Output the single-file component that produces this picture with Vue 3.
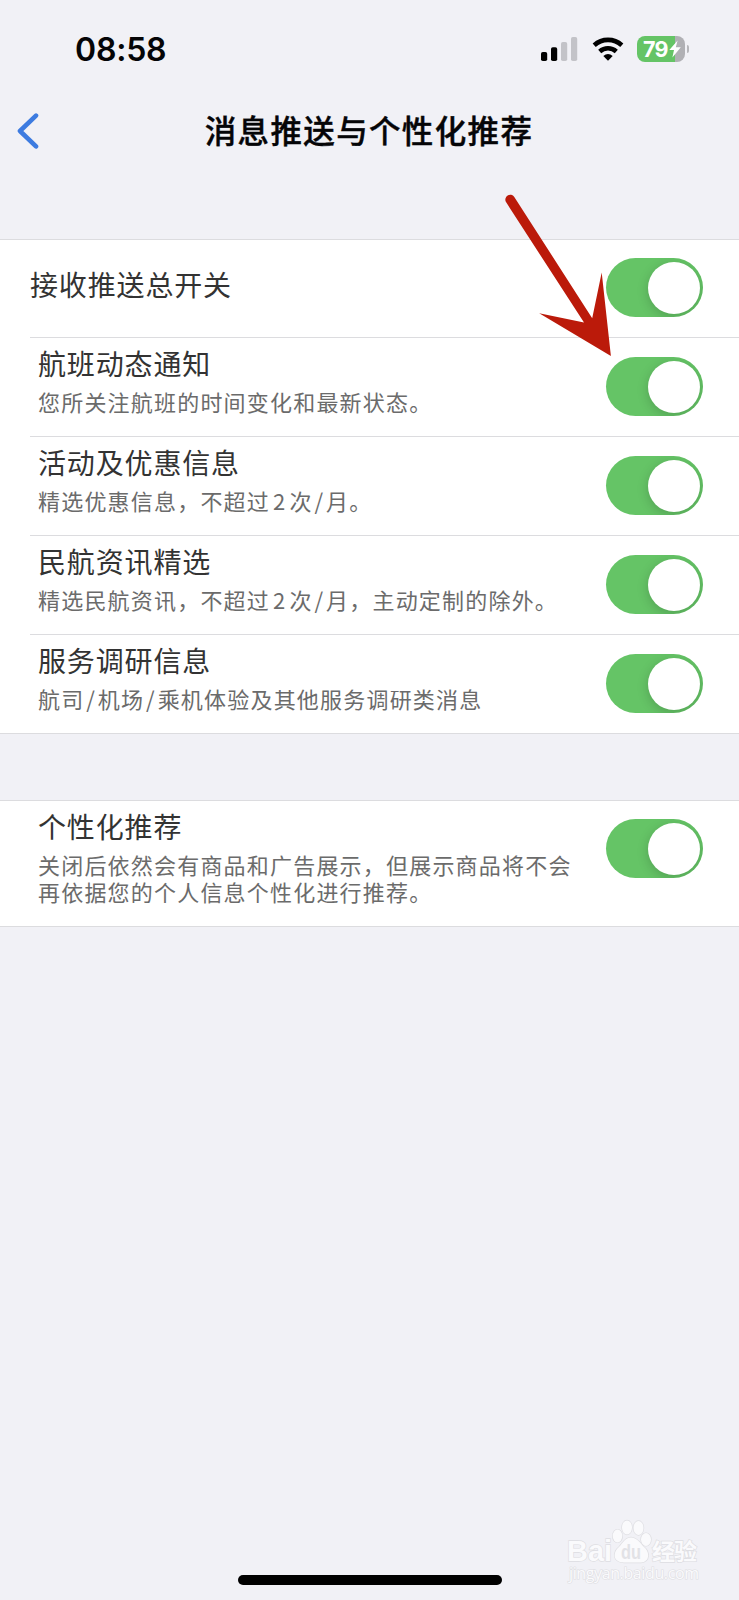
<script setup>
import { ref } from 'vue'

const groups = ref([
  [
    { title: '接收推送总开关', lines: [], on: true },
    { title: '航班动态通知', lines: ['您所关注航班的时间变化和最新状态。'], on: true },
    { title: '活动及优惠信息', lines: ['精选优惠信息，不超过2次/月。'], on: true },
    { title: '民航资讯精选', lines: ['精选民航资讯，不超过2次/月，主动定制的除外。'], on: true },
    { title: '服务调研信息', lines: ['航司/机场/乘机体验及其他服务调研类消息'], on: true }
  ],
  [
    {
      title: '个性化推荐',
      lines: ['关闭后依然会有商品和广告展示，但展示商品将不会', '再依据您的个人信息个性化进行推荐。'],
      on: true
    }
  ]
])

// digits and slashes get a little air around them
const split = (line) => line.split(/([0-9/])/).filter(Boolean)

const partClass = (part) => {
  if (part === '/') return 'slash'
  return /^\d$/.test(part) ? 'digit' : ''
}
</script>

<template>
  <div class="screen">
    <header class="status-bar">
      <span class="time">08:58</span>
      <div class="status-icons">
        <svg class="signal" width="37" height="26" viewBox="0 0 37 26">
          <rect x="0" y="16" width="6.2" height="9" rx="1.8" />
          <rect x="10" y="11.3" width="6.2" height="13.7" rx="1.8" />
          <rect class="weak" x="20" y="6" width="6.2" height="19" rx="1.8" />
          <rect class="weak" x="30" y="1" width="6.2" height="24" rx="1.8" />
        </svg>
        <svg class="wifi" width="32" height="26" viewBox="0 0 32 26">
          <path class="arc" d="M2.2 9.2 A20.5 20.5 0 0 1 29.8 9.2" />
          <path class="arc" d="M7.7 15.4 A12.6 12.6 0 0 1 24.3 15.4" />
          <path d="M11.3 20 Q16 16.2 20.7 20 L16 24.8 Z" />
        </svg>
        <div class="battery">
          <span class="level">79</span>
          <svg class="bolt" width="12" height="18" viewBox="0 0 12 18">
            <path d="M8.6 0.5 L0.3 10 H5 L3.4 17.4 L11.8 7.2 H6.8 Z" />
          </svg>
        </div>
        <span class="battery-cap"></span>
      </div>
    </header>

    <nav class="nav-bar">
      <svg class="back" width="24" height="40" viewBox="0 0 24 40">
        <path d="M21 4.6 L5 20 L21 35.4" />
      </svg>
      <h1>消息推送与个性化推荐</h1>
    </nav>

    <main>
      <section v-for="(group, index) in groups" :key="index" class="group">
        <div
          v-for="item in group"
          :key="item.title"
          class="row"
          :class="{ single: !item.lines.length, tall: item.lines.length > 1 }"
        >
          <div class="texts">
            <h2>{{ item.title }}</h2>
            <p v-for="line in item.lines" :key="line">
              <span v-for="(part, i) in split(line)" :key="i" :class="partClass(part)">{{ part }}</span>
            </p>
          </div>
          <button class="switch" :class="{ on: item.on }" @click="item.on = !item.on">
            <span class="knob"></span>
          </button>
        </div>
      </section>
    </main>

    <svg class="arrow" width="112" height="168" viewBox="0 0 112 168">
      <path
        d="M6 12.1 A4.9 4.9 0 0 1 14.3 6.9 L92.2 128.3 L101.7 82.5 L110.9 166 L39.2 123.3 L84 132.6 Z"
      />
    </svg>

    <svg class="watermark" width="150" height="76" viewBox="0 0 150 76">
      <text class="brand" x="16" y="46" textLength="45" lengthAdjust="spacingAndGlyphs">Bai</text>
      <g class="paw">
        <ellipse cx="66.5" cy="21" rx="4.8" ry="6.4" />
        <ellipse cx="76" cy="12.5" rx="5" ry="7" />
        <ellipse cx="87.5" cy="13" rx="5" ry="7" />
        <ellipse cx="95" cy="24.5" rx="5" ry="6.4" />
        <path d="M80 22.5 C86 22.5 89 28 93 32 C99 37 99 47 90 47.5 H73 C61 47 62 37 68 32 C72 28 74 22.5 80 22.5 Z" />
      </g>
      <text class="du" x="70" y="43.5" textLength="20" lengthAdjust="spacingAndGlyphs">du</text>
      <text class="cn" x="101" y="45" textLength="45">经验</text>
      <text class="url" x="18" y="64" textLength="130">jingyan.baidu.com</text>
    </svg>

    <div class="home-indicator"></div>
  </div>
</template>

<style>
body {
  background: #f1f1f6;
}
</style>

<style scoped>
.screen {
  position: relative;
  display: flex;
  flex-direction: column;
  width: 739px;
  height: 1600px;
  overflow: hidden;
  background: #f1f1f6;
  font-family: 'Noto Sans CJK SC', sans-serif;
}

.status-bar {
  display: flex;
  align-items: center;
  justify-content: space-between;
  height: 98px;
  padding: 0 50px 0 75px;
  box-sizing: border-box;
}

.time {
  padding-top: 2px;
  font-family: Inter, sans-serif;
  font-size: 32px;
  font-weight: 600;
  line-height: 40px;
  letter-spacing: -0.2px;
  color: #050507;
}

.status-icons {
  display: flex;
  align-items: center;
}

.wifi {
  margin-left: 14px;
}

.wifi .arc {
  fill: none;
  stroke: #000;
  stroke-width: 4.6;
}

.weak {
  fill: #c3c3c8;
}

.battery {
  display: flex;
  align-items: center;
  width: 48px;
  height: 26px;
  margin-left: 13px;
  padding-left: 6px;
  box-sizing: border-box;
  border-radius: 8px;
  background: linear-gradient(to right, #65c466 38px, #b0b0b4 38px);
}

.level {
  width: 26px;
  font-family: Inter, sans-serif;
  font-size: 21.5px;
  font-weight: 700;
  letter-spacing: -0.8px;
  line-height: 26px;
  color: #fff;
}

.bolt {
  fill: #fff;
}

.battery-cap {
  width: 2px;
  height: 8px;
  margin-left: 2px;
  border-radius: 0 3px 3px 0;
  background: #b6b6ba;
}

.nav-bar {
  display: flex;
  align-items: center;
  height: 66px;
  padding: 0 15px;
}

.back {
  fill: none;
  stroke: #3d7be0;
  stroke-width: 4.6;
  stroke-linecap: round;
  stroke-linejoin: round;
}

h1 {
  flex: 1;
  margin: 0 25px 4px 0;
  font-size: 31.5px;
  font-weight: 500;
  letter-spacing: 1.35px;
  text-align: center;
  color: #050507;
  -webkit-text-stroke: 0.4px #050507;
}

main {
  display: flex;
  flex-direction: column;
  gap: 66px;
  padding-top: 75px;
}

.group {
  border-top: 1px solid #dcdcdf;
  border-bottom: 1px solid #dcdcdf;
  background: #fff;
}

.row {
  display: flex;
  justify-content: space-between;
  height: 98px;
  margin-left: 30px;
  padding: 5px 36px 0 8px;
  box-sizing: border-box;
}

.row + .row {
  height: 99px;
  border-top: 1px solid #dcdcdf;
}

.row.single {
  height: 97px;
  padding-top: 24px;
  padding-left: 0;
}

.row.tall {
  height: 125px;
}

h2 {
  margin: 0;
  font-size: 28px;
  font-weight: 400;
  line-height: 40px;
  letter-spacing: 0.85px;
  color: #333;
}

p {
  margin: 0;
  font-size: 22px;
  line-height: 27px;
  letter-spacing: 1.2px;
  white-space: nowrap;
  color: #6b6b6b;
}

h2 + p {
  margin-top: 5px;
}

.digit {
  margin: 0 3px;
}

.slash {
  margin: 0 1.8px;
}

.switch {
  flex: none;
  width: 97px;
  height: 59px;
  margin: 14px 0 0;
  padding: 3.5px;
  border: none;
  border-radius: 30px;
  background: #d8d8dc;
  overflow: hidden;
}

.single .switch {
  margin-top: -6px;
}

.tall .switch {
  margin-top: 13px;
}

.switch.on {
  background: #65c466;
}

.knob {
  display: block;
  width: 52px;
  height: 52px;
  border-radius: 50%;
  background: #fff;
  box-shadow: 0 3px 12px rgba(0, 0, 0, 0.18);
}

.switch.on .knob {
  margin-left: auto;
}

.arrow {
  position: absolute;
  top: 190px;
  left: 500px;
  fill: #bb1a0a;
}

.watermark {
  position: absolute;
  top: 1515px;
  left: 551px;
  fill: #fafafc;
  stroke: #dedee2;
  stroke-width: 1.4;
  paint-order: stroke;
}

.brand,
.du {
  font-family: 'Liberation Sans', sans-serif;
  font-size: 30px;
  font-weight: 700;
}

.du {
  font-size: 20px;
  fill: #e2e2e6;
  stroke: none;
}

.cn {
  font-size: 23px;
  font-weight: 700;
}

.url {
  font-family: 'Open Sans', sans-serif;
  font-size: 16px;
  stroke-width: 1.2;
}

.home-indicator {
  position: absolute;
  bottom: 15px;
  left: 238px;
  width: 264px;
  height: 10px;
  border-radius: 5px;
  background: #000;
}
</style>
